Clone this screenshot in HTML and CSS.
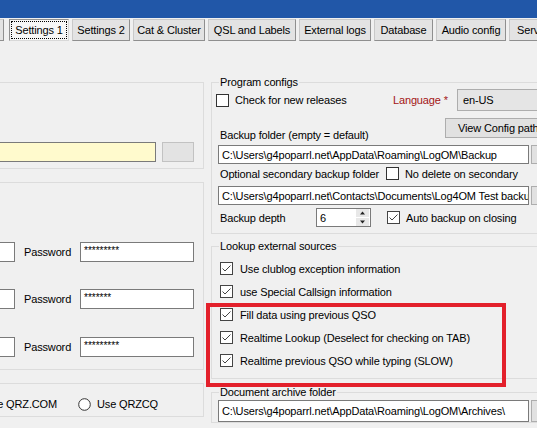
FILE: index.html
```html
<!DOCTYPE html>
<html>
<head>
<meta charset="utf-8">
<link rel="stylesheet" href="styles.css">
</head>
<body>
<div class="titlebar"></div>
<div class="tabs">
  <div class="tab w-part"></div>
  <div class="tab active w-s1"><span class="focus">Settings 1</span></div>
  <div class="tab w-s2">Settings 2</div>
  <div class="tab w-cat">Cat &amp; Cluster</div>
  <div class="tab w-qsl">QSL and Labels</div>
  <div class="tab w-ext">External logs</div>
  <div class="tab w-db">Database</div>
  <div class="tab w-aud">Audio config</div>
  <div class="tab w-srv">Services</div>
</div>
<div class="page">
  <div class="col-left">
    <div class="lgroup lg1">
      <div class="lrow">
        <div class="tb yellow grow"></div>
        <div class="btn btn-side"></div>
      </div>
    </div>
    <div class="lgroup lg2">
      <div class="lrow cred">
        <div class="tb user"></div>
        <div class="pwlabel">Password</div>
        <div class="tb pw">*********</div>
      </div>
      <div class="lrow cred r2">
        <div class="tb user"></div>
        <div class="pwlabel">Password</div>
        <div class="tb pw">*******</div>
      </div>
      <div class="lrow cred r3">
        <div class="tb user"></div>
        <div class="pwlabel">Password</div>
        <div class="tb pw">*********</div>
      </div>
    </div>
    <div class="lgroup lg3">
      <div class="radio-row">
        <div class="opt opt1">
          <svg class="radio" width="13" height="13" viewBox="0 0 13 13"><circle cx="6.5" cy="6.5" r="5.8" fill="#fff" stroke="#333" stroke-width="1"/></svg>
          <span>Use QRZ.COM</span>
        </div>
        <div class="opt">
          <svg class="radio" width="13" height="13" viewBox="0 0 13 13"><circle cx="6.5" cy="6.5" r="5.8" fill="#fff" stroke="#333" stroke-width="1"/></svg>
          <span>Use QRZCQ</span>
        </div>
      </div>
    </div>
  </div>

  <div class="col-right">
    <fieldset class="grp prog">
      <legend>Program configs</legend>
      <div class="gb gb-prog">
        <div class="row pc-row1">
          <div class="chk-item w-check">
            <svg class="cb" width="13" height="13" viewBox="0 0 13 13"><rect x="0.5" y="0.5" width="12" height="12" fill="#fff" stroke="#333"/></svg>
            <span>Check for new releases</span>
          </div>
          <div class="lang">Language *</div>
          <div class="combo">en-US</div>
        </div>
        <div class="row pc-row2">
          <div class="lbl w-backup">Backup folder (empty = default)</div>
          <div class="btn btn-cfg">View Config path</div>
        </div>
        <div class="tb-row">
          <div class="tb path">C:\Users\g4poparrl.net\AppData\Roaming\LogOM\Backup</div>
          <div class="btn btn-dots"></div>
        </div>
        <div class="row pc-row-opt">
          <div class="lbl w-opt">Optional secondary backup folder</div>
          <div class="chk-item">
            <svg class="cb" width="13" height="13" viewBox="0 0 13 13"><rect x="0.5" y="0.5" width="12" height="12" fill="#fff" stroke="#333"/></svg>
            <span>No delete on secondary</span>
          </div>
        </div>
        <div class="tb-row tb-row2">
          <div class="tb path">C:\Users\g4poparrl.net\Contacts\Documents\Log4OM Test backup</div>
          <div class="btn btn-dots"></div>
        </div>
        <div class="row pc-row-depth">
          <div class="lbl w-depth">Backup depth</div>
          <div class="spin">
            <span class="spin-val">6</span>
            <div class="spin-btns">
              <svg width="13" height="8" viewBox="0 0 13 8"><rect x="0" y="0" width="13" height="8" fill="#e8e8e8"/><path d="M4 5.5 L6.5 2.5 L9 5.5 Z" fill="#222"/></svg>
              <svg width="13" height="8" viewBox="0 0 13 8"><rect x="0" y="0" width="13" height="8" fill="#e8e8e8"/><path d="M4 2.5 L6.5 5.5 L9 2.5 Z" fill="#222"/></svg>
            </div>
          </div>
          <div class="chk-item depth-chk">
            <svg class="cb" width="13" height="13" viewBox="0 0 13 13"><rect x="0.5" y="0.5" width="12" height="12" fill="#fff" stroke="#444"/><path d="M2.5 6.5 L5 9 L10.5 3.5" fill="none" stroke="#444" stroke-width="1"/></svg>
            <span>Auto backup on closing</span>
          </div>
        </div>
      </div>
    </fieldset>

    <fieldset class="grp lookup">
      <legend>Lookup external sources</legend>
      <div class="gb gb-lookup">
        <div class="row lk-row">
          <div class="chk-item lk">
            <svg class="cb" width="13" height="13" viewBox="0 0 13 13"><rect x="0.5" y="0.5" width="12" height="12" fill="#fff" stroke="#444"/><path d="M2.5 6.5 L5 9 L10.5 3.5" fill="none" stroke="#444" stroke-width="1"/></svg>
            <span>Use clublog exception information</span>
          </div>
        </div>
        <div class="row lk-row">
          <div class="chk-item lk">
            <svg class="cb" width="13" height="13" viewBox="0 0 13 13"><rect x="0.5" y="0.5" width="12" height="12" fill="#fff" stroke="#444"/><path d="M2.5 6.5 L5 9 L10.5 3.5" fill="none" stroke="#444" stroke-width="1"/></svg>
            <span>use Special Callsign information</span>
          </div>
        </div>
        <div class="row lk-row">
          <div class="chk-item lk">
            <svg class="cb" width="13" height="13" viewBox="0 0 13 13"><rect x="0.5" y="0.5" width="12" height="12" fill="#fff" stroke="#444"/><path d="M2.5 6.5 L5 9 L10.5 3.5" fill="none" stroke="#444" stroke-width="1"/></svg>
            <span>Fill data using previous QSO</span>
          </div>
        </div>
        <div class="row lk-row">
          <div class="chk-item lk">
            <svg class="cb" width="13" height="13" viewBox="0 0 13 13"><rect x="0.5" y="0.5" width="12" height="12" fill="#fff" stroke="#444"/><path d="M2.5 6.5 L5 9 L10.5 3.5" fill="none" stroke="#444" stroke-width="1"/></svg>
            <span>Realtime Lookup (Deselect for checking on TAB)</span>
          </div>
        </div>
        <div class="row lk-row">
          <div class="chk-item lk">
            <svg class="cb" width="13" height="13" viewBox="0 0 13 13"><rect x="0.5" y="0.5" width="12" height="12" fill="#fff" stroke="#444"/><path d="M2.5 6.5 L5 9 L10.5 3.5" fill="none" stroke="#444" stroke-width="1"/></svg>
            <span>Realtime previous QSO while typing (SLOW)</span>
          </div>
        </div>
      </div>
    </fieldset>

    <fieldset class="grp docs">
      <legend>Document archive folder</legend>
      <div class="gb gb-docs">
        <div class="tb-row tb-row-doc">
          <div class="tb path">C:\Users\g4poparrl.net\AppData\Roaming\LogOM\Archives\</div>
          <div class="btn btn-dots"></div>
        </div>
      </div>
    </fieldset>
  </div>
</div>
<div class="highlight"></div>
</body>
</html>
```

FILE: styles.css
```css
* { box-sizing: border-box; }
html, body { margin: 0; padding: 0; }
body {
  position: relative;
  width: 537px;
  height: 428px;
  overflow: hidden;
  background: #f0f0f0;
  font-family: "Liberation Sans", Arial, sans-serif;
  font-size: 11px;
  letter-spacing: -0.15px;
  color: #000;
}

.titlebar { height: 18px; background: #2157a8; }

/* tab strip (button appearance) */
.tabs {
  display: flex;
  gap: 3px;
  margin-top: 1px;
  margin-left: -56px;
  height: 22px;
}
.tab {
  flex: none;
  height: 22px;
  display: flex;
  align-items: center;
  justify-content: center;
  white-space: nowrap;
  background: #e3e3e3;
  border: 1px solid;
  border-color: #c9c9c9 #8f8f8f #8f8f8f #c9c9c9;
}
.tab.active {
  margin-left: 2px;
  background: #f7f7f7;
  border-color: #8f8f8f #d8d8d8 #d8d8d8 #8f8f8f;
  padding: 1px;
}
.focus {
  flex: 1;
  align-self: stretch;
  display: flex;
  align-items: center;
  justify-content: center;
  border: 1px dotted #000;
}
.w-part { width: 60px; }
.w-s1 { width: 60px; }
.w-s2 { width: 58px; }
.w-cat { width: 72px; }
.w-qsl { width: 88px; }
.w-ext { width: 72px; }
.w-db { width: 59px; }
.w-aud { width: 70px; }
.w-srv { width: 60px; justify-content: flex-start; padding-left: 7px; }

/* page layout */
.page {
  display: flex;
  gap: 7px;
  margin-left: -100px;
}
.col-left {
  flex: none;
  width: 304px;
  display: flex;
  flex-direction: column;
  padding-top: 41px;
}
.col-right {
  flex: none;
  width: 345px;
  display: flex;
  flex-direction: column;
  padding-top: 34px;
}

/* generic controls */
.tb {
  height: 100%;
  background: #fff;
  border: 1px solid #7a7a7a;
  padding-left: 3px;
  display: flex;
  align-items: center;
  white-space: nowrap;
  overflow: hidden;
}
.btn {
  background: #e1e1e1;
  border: 1px solid #adadad;
  display: flex;
  align-items: center;
  white-space: nowrap;
}
.grow { flex: 1; }

/* left groups */
.lgroup {
  border: 1px solid #dcdcdc;
  padding-right: 9px;
}
.lrow {
  display: flex;
  justify-content: flex-end;
  height: 20px;
}
.lg1 { padding-top: 59px; padding-bottom: 6px; }
.lg1 .lrow { gap: 6px; }
.yellow { background: #fffacd; }
.btn-side { width: 32px; height: 20px; border-color: #c2c2c2; background: #e3e3e3; }

.lg2 { margin-top: 13px; padding-top: 59px; padding-bottom: 12px; }
.lg2 .r2 { margin-top: 27px; }
.lg2 .r3 { margin-top: 28px; }
.cred .user { width: 60px; margin-right: 9px; }
.pwlabel { width: 56px; display: flex; align-items: center; }
.cred .pw { width: 114px; font-size: 10px; letter-spacing: 0; align-items: flex-start; padding-top: 2px; }

.lg3 { margin-top: 13px; padding: 10px 0 2px 0; }
.radio-row {
  display: grid;
  grid-template-columns: 177px auto;
  height: 20px;
  align-items: center;
}
.opt { display: flex; align-items: center; gap: 6px; }
.opt1 { justify-self: end; margin-right: 21px; }
.radio { flex: none; }

/* right groups */
fieldset.grp {
  margin: 0;
  padding: 0;
  min-width: 0;
  border: 1px solid #dcdcdc;
}
fieldset.grp legend {
  padding: 0 1px;
  margin-left: 7px;
  line-height: 14px;
}
.row { display: flex; align-items: center; }
.chk-item { display: flex; align-items: center; gap: 6px; white-space: nowrap; flex: none; }
.cb { flex: none; }
.lbl { padding-left: 4px; white-space: nowrap; flex: none; }

.gb-prog { padding: 0 0 6px 4px; }
.pc-row1 { height: 22px; }
.w-check { width: 177px; }
.lang { width: 64px; flex: none; color: #a31515; }
.combo {
  flex: 1;
  min-width: 0;
  height: 22px;
  background: #e5e5e5;
  border: 1px solid #adadad;
  padding-left: 5px;
  display: flex;
  align-items: center;
}
.pc-row2 { height: 27px; margin-top: 7px; align-items: flex-start; }
.w-backup { width: 229px; align-self: flex-end; margin-bottom: 4px; }
.btn-cfg { width: 110px; flex: none; height: 20px; padding-left: 12px; }

.tb-row { display: flex; gap: 2px; height: 19px; margin-left: 2px; }
.tb-row .path { width: 311px; flex: none; }
.btn-dots { width: 26px; flex: none; }

.pc-row-opt { height: 17px; margin-top: 1px; }
.w-opt { width: 170px; }
.tb-row2 { margin-top: 4px; }

.pc-row-depth { height: 19px; margin-top: 3px; }
.w-depth { width: 100px; }
.spin {
  width: 55px;
  flex: none;
  height: 19px;
  background: #fff;
  border: 1px solid #7a7a7a;
  display: flex;
  align-items: center;
  justify-content: space-between;
  padding: 0 1px 0 3px;
}
.spin-btns { display: flex; flex-direction: column; gap: 1px; }
.spin-btns svg { display: block; }
.depth-chk { margin-left: 16px; }

fieldset.lookup { margin-top: 5px; }
.gb-lookup { padding: 4px 0 6px 8px; }
.lk-row { height: 23px; }
.lk { gap: 7px; }

fieldset.docs { margin-top: 6px; }
.gb-docs { padding: 1px 0 0 6px; }
.tb-row-doc { margin-left: 0; height: 22px; }

/* annotation overlay */
.highlight {
  position: absolute;
  left: 206px;
  top: 303px;
  width: 300px;
  height: 84px;
  border: 4px solid #e3202b;
}
```
